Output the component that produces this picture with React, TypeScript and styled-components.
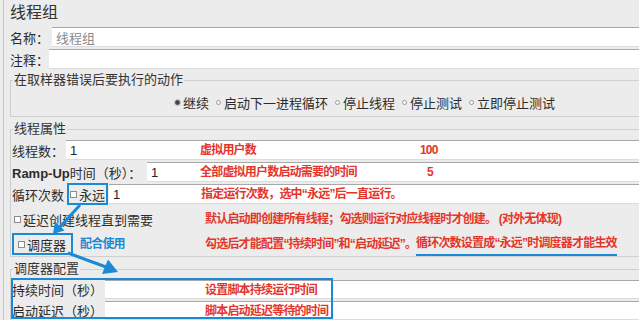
import React from "react";
import styled, { createGlobalStyle } from "styled-components";

const GlobalStyle = createGlobalStyle`
  html, body {
    margin: 0;
    padding: 0;
    background: #ececec;
  }
  body {
    font-family: "Liberation Sans", "Noto Sans CJK SC", sans-serif;
  }
`;

const RED = "#e4352b";
const BLUE = "#1a8ad6";

const Page = styled.div`
  position: relative;
  width: 639px;
  height: 320px;
  overflow: hidden;
  background: #ececec;
  color: #2c2c2c;
  font-size: 13px;
`;

const Panel = styled.div`
  margin-left: 3px;
  height: 100%;
  border-left: 1px solid #c4c4c4;
  padding-left: 5px;
`;

const Title = styled.div`
  height: 26px;
  line-height: 26px;
  padding-left: 1px;
  font-size: 16px;
  color: #333;
`;

const Row = styled.div<{ $top: number; $h?: number }>`
  position: relative;
  display: flex;
  align-items: center;
  height: ${({ $h }) => $h ?? 20}px;
  margin-top: ${({ $top }) => $top}px;
`;

const Label = styled.div<{ $w: number }>`
  flex: 0 0 ${({ $w }) => $w}px;
  padding-left: 1px;
  box-sizing: border-box;
  white-space: nowrap;
  font-size: 13px;
`;

const Bold = styled.span`
  font-weight: 700;
  font-size: 13px;
`;

const Field = styled.div<{ $ml?: number }>`
  position: relative;
  flex: 1;
  height: 100%;
  display: flex;
  align-items: center;
  margin-left: ${({ $ml }) => $ml ?? 0}px;
  padding-left: 4px;
  box-sizing: border-box;
  background: #fff;
  border-top: 1px solid #a8a8a8;
  border-bottom: 1px solid #dcdcdc;
  white-space: nowrap;
`;

const Value = styled.span<{ $muted?: boolean }>`
  color: ${({ $muted }) => ($muted ? "#8a8a8a" : "#222")};
  font-size: 13px;
`;

const Group = styled.fieldset<{ $top: number; $pb?: number }>`
  margin: ${({ $top }) => $top}px 0 0 1px;
  padding: 0 0 ${({ $pb }) => $pb ?? 0}px 0;
  border: 1px solid #cfcfcf;
  border-right: none;
  min-width: 0;
`;

const Legend = styled.legend`
  margin-left: 2px;
  padding: 0 1px;
  font-size: 13px;
  line-height: 16px;
  color: #333;
`;

const RadioRow = styled.div`
  display: flex;
  align-items: center;
  height: 28px;
  padding-left: 164px;
  gap: 7px;
  white-space: nowrap;
`;

const RadioItem = styled.span`
  display: inline-flex;
  align-items: center;
  gap: 3px;
`;

const Radio = styled.span<{ $on?: boolean }>`
  width: 5px;
  height: 5px;
  border-radius: 50%;
  box-sizing: border-box;
  border: 1px solid ${({ $on }) => ($on ? "#555" : "#999")};
  background: ${({ $on }) => ($on ? "#444" : "#fff")};
  box-shadow: ${({ $on }) => ($on ? "0 0 0 1px #c8c8c8" : "none")};
`;

const CheckWrap = styled.span<{ $boxed?: boolean; $pl?: number; $pr?: number; $ml?: number }>`
  display: inline-flex;
  align-items: center;
  gap: 2px;
  height: 18px;
  margin-left: ${({ $ml }) => $ml ?? 0}px;
  padding: 0 ${({ $pr }) => $pr ?? 0}px 0 ${({ $pl }) => $pl ?? 0}px;
  outline: ${({ $boxed }) => ($boxed ? `2px solid ${BLUE}` : "none")};
  white-space: nowrap;
`;

const Box = styled.span`
  width: 5px;
  height: 5px;
  border: 1px solid #8c8c8c;
  background: #fff;
`;

const Note = styled.span<{ $x: number; $blue?: boolean; $line?: boolean }>`
  position: absolute;
  left: ${({ $x }) => $x}px;
  top: 50%;
  transform: translateY(-50%);
  font-size: 12px;
  font-weight: 700;
  letter-spacing: -0.8px;
  line-height: 15px;
  white-space: nowrap;
  color: ${({ $blue }) => ($blue ? BLUE : RED)};
  padding-bottom: ${({ $line }) => ($line ? 3 : 0)}px;
  border-bottom: ${({ $line }) => ($line ? `2px solid ${BLUE}` : "none")};
  margin-top: ${({ $line }) => ($line ? 2 : 0)}px;
`;

const Overlay = styled.svg`
  position: absolute;
  left: 0;
  top: 0;
  pointer-events: none;
`;

const App: React.FC = () => {
  return (
    <Page>
      <GlobalStyle />
      <Panel>
        <Title>线程组</Title>
        <Row $top={1}>
          <Label $w={43}>名称：</Label>
          <Field>
            <Value $muted>线程组</Value>
          </Field>
        </Row>
        <Row $top={2}>
          <Label $w={39}>注释：</Label>
          <Field />
        </Row>

        <Group $top={3}>
          <Legend>在取样器错误后要执行的动作</Legend>
          <RadioRow>
            <RadioItem><Radio $on />继续</RadioItem>
            <RadioItem><Radio />启动下一进程循环</RadioItem>
            <RadioItem><Radio />停止线程</RadioItem>
            <RadioItem><Radio />停止测试</RadioItem>
            <RadioItem><Radio />立即停止测试</RadioItem>
          </RadioRow>
        </Group>

        <Group $top={4} $pb={2}>
          <Legend>线程属性</Legend>
          <Row $top={3}>
            <Label $w={55}>线程数：</Label>
            <Field>
              <Value>1</Value>
              <Note $x={134}>虚拟用户数</Note>
              <Note $x={354}>100</Note>
            </Field>
          </Row>
          <Row $top={2}>
            <Label $w={136}>
              <Bold>Ramp-Up</Bold>时间（秒）：
            </Label>
            <Field>
              <Value>1</Value>
              <Note $x={53}>全部虚拟用户数启动需要的时间</Note>
              <Note $x={280}>5</Note>
            </Field>
          </Row>
          <Row $top={2}>
            <Label $w={58}>循环次数</Label>
            <CheckWrap $boxed $pl={1} $pr={1}>
              <Box />
              永远
            </CheckWrap>
            <Field $ml={3}>
              <Value>1</Value>
              <Note $x={92}>指定运行次数，选中“永远”后一直运行。</Note>
            </Field>
          </Row>
          <Row $top={5}>
            <CheckWrap $pl={3}>
              <Box />
              延迟创建线程直到需要
            </CheckWrap>
            <Note $x={194}>默认启动即创建所有线程；勾选则运行对应线程时才创建。 (对外无体现)</Note>
          </Row>
          <Row $top={5}>
            <CheckWrap $boxed $pl={4} $pr={5} $ml={3}>
              <Box />
              调度器
            </CheckWrap>
            <Note $x={69} $blue>配合使用</Note>
            <Note $x={194}>勾选后才能配置“持续时间”和“启动延迟”。</Note>
            <Note $x={405} $line>循环次数设置成“永远”时调度器才能生效</Note>
          </Row>
        </Group>

        <Group $top={4}>
          <Legend>调度器配置</Legend>
          <Row $top={3} $h={19}>
            <Label $w={94}>持续时间（秒）</Label>
            <Field>
              <Note $x={100}>设置脚本持续运行时间</Note>
            </Field>
          </Row>
          <Row $top={2} $h={19}>
            <Label $w={94}>启动延迟（秒）</Label>
            <Field>
              <Note $x={100}>脚本启动延迟等待的时间</Note>
            </Field>
          </Row>
        </Group>
      </Panel>

      <Overlay width={639} height={320} viewBox="0 0 639 320">
        <rect x={12} y={279} width={320} height={39} fill="none" stroke={BLUE} strokeWidth={2} />
        <line x1={80} y1={205} x2={59} y2={228} stroke={BLUE} strokeWidth={3} />
        <polygon points="53,234 64.5,230.5 55,221.5" fill={BLUE} />
        <line x1={68} y1={253} x2={106} y2={267} stroke={BLUE} strokeWidth={3} />
        <polygon points="118,272 102,274 108,259.5" fill={BLUE} />
      </Overlay>
    </Page>
  );
};

export default App;
